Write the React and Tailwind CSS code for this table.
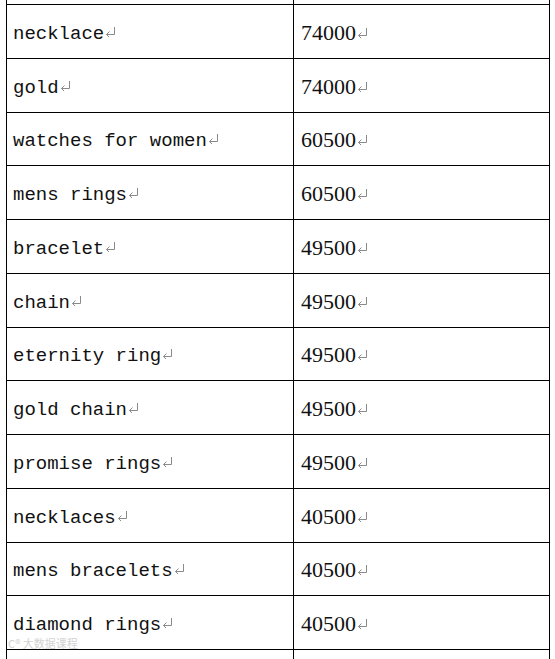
import React from 'react';

const rows = [
  ['necklace', '74000'],
  ['gold', '74000'],
  ['watches for women', '60500'],
  ['mens rings', '60500'],
  ['bracelet', '49500'],
  ['chain', '49500'],
  ['eternity ring', '49500'],
  ['gold chain', '49500'],
  ['promise rings', '49500'],
  ['necklaces', '40500'],
  ['mens bracelets', '40500'],
  ['diamond rings', '40500'],
];

// paragraph mark shown after each cell's text
const ReturnMark = () => (
  <svg width="11" height="10" viewBox="0 0 11 10" className="ml-[1px] inline-block align-[2px]" fill="none" stroke="#8a8a8a" strokeWidth="1">
    <path d="M9.5 0 V7.5 H1.5" />
    <path d="M4.5 4.5 L1.5 7.5 L4.5 10.5" />
  </svg>
);

const App = () => {
  return (
    <div className="relative h-[659px] w-[555px] overflow-hidden bg-white">
      <div className="ml-[6px] w-[544px] border-x border-black">
        {/* top partial row */}
        <div className="flex h-[4px]">
          <div className="w-[287px] border-r border-black" />
          <div className="flex-1" />
        </div>

        {rows.map(([term, volume]) => (
          <div key={term} className="flex h-[53.75px] border-t border-black">
            <div className="flex w-[287px] items-end border-r border-black pb-[14px] pl-[6px]">
              <span className="block whitespace-pre text-[19px] leading-none text-[#111]" style={{ fontFamily: '"Liberation Mono", monospace' }}>
                {term}
                <ReturnMark />
              </span>
            </div>
            <div className="flex flex-1 items-end pb-[14px] pl-[7px]">
              <span className="block text-[22px] leading-none text-[#111]" style={{ fontFamily: '"Liberation Serif", serif' }}>
                {volume}
                <ReturnMark />
              </span>
            </div>
          </div>
        ))}

        {/* bottom partial row */}
        <div className="flex h-[20px] border-t border-black">
          <div className="w-[287px] border-r border-black" />
          <div className="flex-1" />
        </div>
      </div>

      {/* faint watermark */}
      <div className="absolute left-[8px] top-[638px] text-[11px] leading-none text-[#d2d2d2]" style={{ fontFamily: '"Noto Sans CJK SC", sans-serif' }}>
        C® 大数据课程
      </div>
    </div>
  );
};

export default App;
